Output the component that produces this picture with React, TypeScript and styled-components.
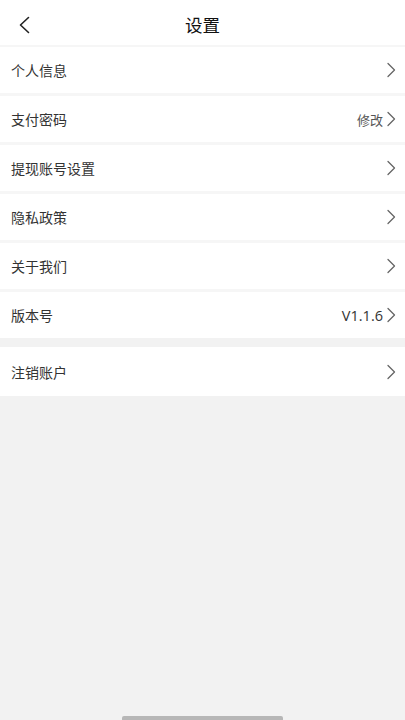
import React from "react";
import styled, { createGlobalStyle } from "styled-components";

const Global = createGlobalStyle`
  html, body { margin: 0; padding: 0; background: #f2f2f2; }
  body { font-family: "Noto Sans CJK SC", "Liberation Sans", sans-serif; }
  * { box-sizing: border-box; }
`;

const Page = styled.div`
  width: 405px;
  height: 720px;
  background: #f2f2f2;
  display: flex;
  flex-direction: column;
  position: relative;
  overflow: hidden;
`;

const Header = styled.div`
  height: 45px;
  background: #fff;
  display: flex;
  align-items: center;
  justify-content: center;
  position: relative;
`;

const Back = styled.button`
  position: absolute;
  left: 14px;
  top: 13px;
  width: 20px;
  height: 24px;
  border: none;
  background: none;
  padding: 0;
  display: flex;
  align-items: center;
  justify-content: center;
`;

const Title = styled.div`
  font-size: 17.5px;
  color: #111;
  line-height: 1;
  margin-top: 4px;
`;

const List = styled.div`
  display: flex;
  flex-direction: column;
  gap: 3px;
  background: #f6f6f6;
  padding-top: 2px;
`;

const Row = styled.div<{ $tall?: boolean }>`
  height: ${(p) => (p.$tall ? "49px" : "46px")};
  background: #fff;
  display: flex;
  align-items: center;
  padding: 0 9px 0 11px;
`;

const Label = styled.span`
  flex: 1;
  font-size: 14px;
  color: #333;
`;

const Value = styled.span<{ $latin?: boolean }>`
  font-size: ${(p) => (p.$latin ? "14.5px" : "13px")};
  color: ${(p) => (p.$latin ? "#333" : "#555")};
  font-family: ${(p) => (p.$latin ? '"Open Sans", "Liberation Sans", sans-serif' : "inherit")};
  margin-right: 3px;
`;

const Spacer = styled.div`
  height: 9px;
  background: #f2f2f2;
`;

const HomeBar = styled.div`
  position: absolute;
  left: 122px;
  bottom: 0;
  width: 161px;
  height: 4px;
  border-radius: 2px 2px 0 0;
  background: #b7b7b7;
`;

const Chevron = () => (
  <svg width="10" height="16" viewBox="0 0 10 16" fill="none">
    <path d="M2 1.5 L8.5 8 L2 14.5" stroke="#666" strokeWidth="1.3" strokeLinecap="round" strokeLinejoin="round" />
  </svg>
);

const BackIcon = () => (
  <svg width="14" height="18" viewBox="0 0 14 18" fill="none">
    <path d="M11.5 1.5 L3.5 9 L11.5 16.5" stroke="#222" strokeWidth="1.6" strokeLinecap="round" strokeLinejoin="round" />
  </svg>
);

type Item = { label: string; value?: string; latin?: boolean };

const items: Item[] = [
  { label: "个人信息" },
  { label: "支付密码", value: "修改" },
  { label: "提现账号设置" },
  { label: "隐私政策" },
  { label: "关于我们" },
  { label: "版本号", value: "V1.1.6", latin: true },
];

export default function App() {
  return (
    <Page>
      <Global />
      <Header>
        <Back aria-label="返回">
          <BackIcon />
        </Back>
        <Title>设置</Title>
      </Header>
      <List>
        {items.map((it) => (
          <Row key={it.label}>
            <Label>{it.label}</Label>
            {it.value && <Value $latin={it.latin}>{it.value}</Value>}
            <Chevron />
          </Row>
        ))}
      </List>
      <Spacer />
      <Row $tall>
        <Label>注销账户</Label>
        <Chevron />
      </Row>
      <HomeBar />
    </Page>
  );
}
